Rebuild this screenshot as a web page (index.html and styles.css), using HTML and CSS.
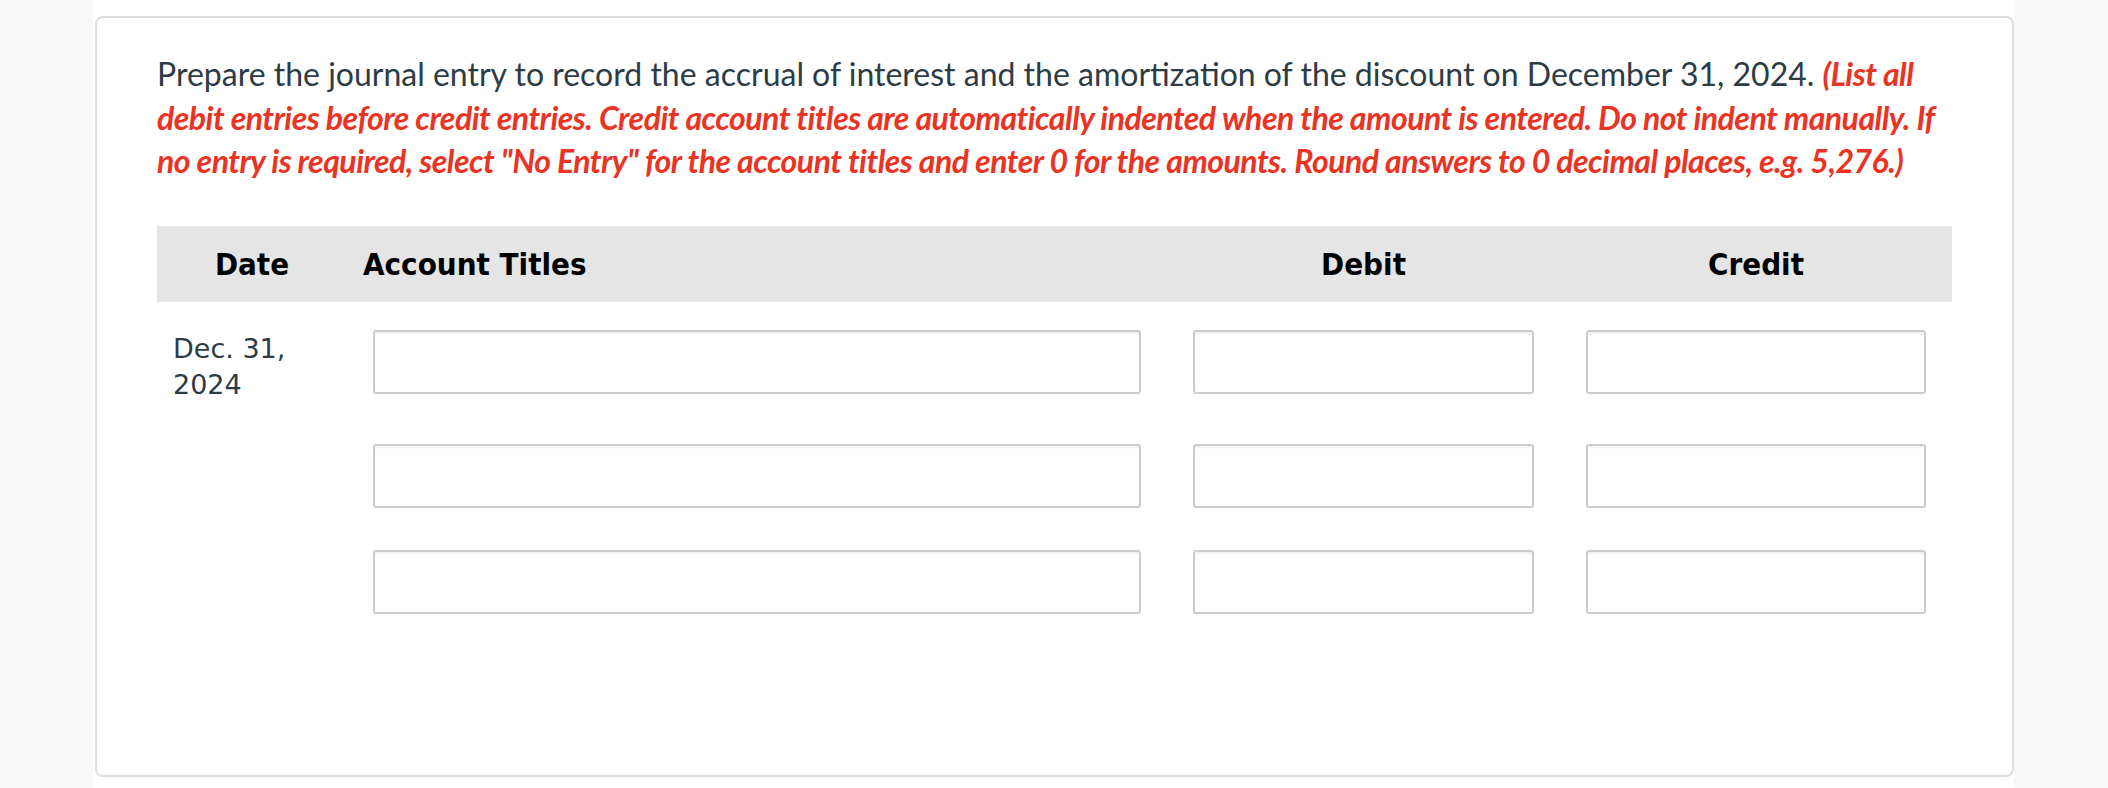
FILE: index.html
```html
<!DOCTYPE html>
<html lang="en">
<head>
<meta charset="utf-8">
<title>Journal entry</title>
<link rel="stylesheet" href="styles.css">
</head>
<body>
<div class="page">
  <div class="card">
    <p class="prompt">Prepare the journal entry to record the accrual of interest and the amortization of the discount on December 31, 2024. <em class="note">(List all debit entries before credit entries. Credit account titles are automatically indented when the amount is entered. Do not indent manually. If no entry is required, select "No Entry" for the account titles and enter 0 for the amounts. Round answers to 0 decimal places, e.g. 5,276.)</em></p>

    <div class="journal">
      <div class="jrow jhead">
        <div class="th th-center">Date</div>
        <div class="th th-left">Account Titles</div>
        <div class="th th-center">Debit</div>
        <div class="th th-center">Credit</div>
      </div>

      <div class="jrow">
        <div class="cell cell-date">Dec. 31, 2024</div>
        <div class="cell"><input class="field" type="text"></div>
        <div class="cell"><input class="field" type="text"></div>
        <div class="cell"><input class="field" type="text"></div>
      </div>

      <div class="jrow">
        <div class="cell cell-date"></div>
        <div class="cell"><input class="field" type="text"></div>
        <div class="cell"><input class="field" type="text"></div>
        <div class="cell"><input class="field" type="text"></div>
      </div>

      <div class="jrow">
        <div class="cell cell-date"></div>
        <div class="cell"><input class="field" type="text"></div>
        <div class="cell"><input class="field" type="text"></div>
        <div class="cell"><input class="field" type="text"></div>
      </div>
    </div>
  </div>
</div>
</body>
</html>
```

FILE: styles.css
```css
* {
  box-sizing: border-box;
}

html, body {
  margin: 0;
  padding: 0;
}

body {
  background: #f8f8f8;
  font-family: "Lato", "Open Sans", sans-serif;
  color: #2d3b45;
}

.page {
  margin-left: 93px;
  width: 1921px;
  min-height: 788px;
  background: #ffffff;
  padding-top: 16px;
  padding-left: 2px;
}

.card {
  width: 1919px;
  border: 2px solid #dedede;
  border-radius: 8px;
  background: #ffffff;
  padding: 34px 60px 140px 60px;
}

.prompt {
  margin: 0;
  font-family: "Lato", sans-serif;
  font-size: 32px;
  line-height: 43.5px;
  color: #2d3b45;
}

.note {
  font-style: italic;
  font-weight: 700;
  letter-spacing: -0.5px;
  color: #ea3323;
}

.journal {
  margin-top: 43px;
}

.jrow {
  display: grid;
  grid-template-columns: 190px 820px 393px 392px;
}

.jhead {
  height: 76px;
  background: #e5e5e5;
  align-items: center;
  margin-bottom: 7px;
}

.th {
  font-family: "DejaVu Sans Condensed", "DejaVu Sans", sans-serif;
  font-stretch: condensed;
  font-weight: 700;
  font-size: 31px;
  color: #000000;
}

.th-center {
  text-align: center;
}

.th-left {
  padding-left: 16px;
}

.cell {
  padding: 21px 26px;
}

.cell-date {
  padding: 22px 16px 20px 16px;
  font-family: "DejaVu Sans", sans-serif;
  font-size: 27px;
  line-height: 36px;
  color: #2d3b45;
}

.field {
  display: block;
  width: 100%;
  height: 64px;
  margin: 0;
  border: 2px solid #cccccc;
  border-radius: 3px;
  background: #ffffff;
  box-shadow: inset 0 2px 2px rgba(0, 0, 0, 0.06);
  font-size: 27px;
  padding: 0 12px;
  outline: none;
}
```
